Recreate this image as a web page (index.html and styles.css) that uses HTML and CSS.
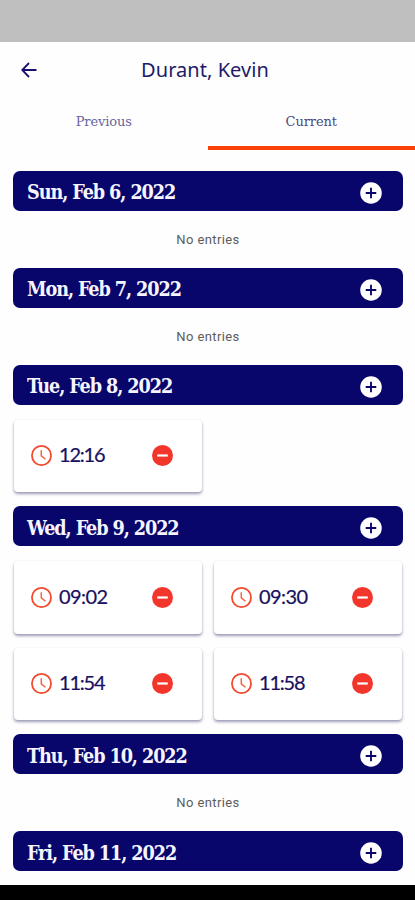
FILE: index.html
```
<!DOCTYPE html>
<html lang="en">
<head>
<meta charset="utf-8">
<title>Durant, Kevin</title>
<link rel="stylesheet" href="styles.css">
</head>
<body>
<svg class="defs" width="0" height="0">
  <symbol id="add" viewBox="2 2 20 20"><circle cx="12" cy="12" r="9.8" fill="#fff"/><path d="M12 7.2v9.6M7.2 12h9.6" stroke="#08056b" stroke-width="1.7"/></symbol>
  <symbol id="remove" viewBox="2 2 20 20"><circle cx="12" cy="12" r="10" fill="#f3362b"/><path d="M7 12h10" stroke="#fff" stroke-width="2.1"/></symbol>
  <symbol id="clock" viewBox="2 2 20 20"><circle cx="12" cy="12" r="9.1" fill="none" stroke="#f4492c" stroke-width="1.7"/><path d="M11.8 7v5.4l4 3.2" fill="none" stroke="#f4643c" stroke-width="1.4"/></symbol>
</svg>
<div class="status"></div>
<header class="top">
  <svg class="back" viewBox="0 0 16 16"><path d="M15.5 8H1.2M8 1L1.2 8L8 15" fill="none" stroke="#17106f" stroke-width="1.8"/></svg>
  <h1><span>Durant, Kevin</span></h1>
</header>
<nav class="tabs"><div class="tab">Previous</div><div class="tab active">Current</div></nav>
<main>
  <section><h2><span class="date">Sun, Feb 6, 2022</span><svg><use href="#add"/></svg></h2><p>No entries</p></section>
  <section><h2><span class="date">Mon, Feb 7, 2022</span><svg><use href="#add"/></svg></h2><p>No entries</p></section>
  <section><h2><span class="date">Tue, Feb 8, 2022</span><svg><use href="#add"/></svg></h2>
    <div class="cards">
      <div class="card"><svg><use href="#clock"/></svg><time class="tight">12:16</time><svg><use href="#remove"/></svg></div>
    </div>
  </section>
  <section><h2><span class="date">Wed, Feb 9, 2022</span><svg><use href="#add"/></svg></h2>
    <div class="cards">
      <div class="card"><svg><use href="#clock"/></svg><time>09:02</time><svg><use href="#remove"/></svg></div>
      <div class="card"><svg><use href="#clock"/></svg><time>09:30</time><svg><use href="#remove"/></svg></div>
      <div class="card"><svg><use href="#clock"/></svg><time class="tight">11:54</time><svg><use href="#remove"/></svg></div>
      <div class="card"><svg><use href="#clock"/></svg><time class="tight">11:58</time><svg><use href="#remove"/></svg></div>
    </div>
  </section>
  <section><h2><span class="date">Thu, Feb 10, 2022</span><svg><use href="#add"/></svg></h2><p>No entries</p></section>
  <section><h2><span class="date">Fri, Feb 11, 2022</span><svg><use href="#add"/></svg></h2></section>
</main>
<footer></footer>
</body>
</html>
```
FILE: styles.css
```
* { box-sizing: border-box; margin: 0; padding: 0; }
body { width: 415px; height: 900px; overflow: hidden; background: #fefefe; display: flex; flex-direction: column; }
.defs { position: absolute; }
.status { height: 42px; background: #bfbfbf; flex: none; }
.top { height: 56px; flex: none; display: grid; grid-template-columns: 57px 1fr 57px; align-items: center; }
.back { width: 16px; height: 16px; margin-left: 21px; }
h1 { font: 400 20px/28px "Noto Sans", sans-serif; letter-spacing: .05px; color: #211a68; text-align: center; white-space: nowrap; padding-right: 5px; }
.tabs { height: 52px; flex: none; display: grid; grid-template-columns: 1fr 1fr; }
.tab { font: 400 13px/48px "DejaVu Serif", serif; letter-spacing: -.1px; color: #68649a; text-align: center; border-bottom: 4px solid transparent; }
.tab.active { color: #4c4880; border-bottom-color: #fa4108; }
main { height: 734.5px; flex: none; padding: 20.7px 12px 0 13px; }
h2 { height: 40px; border-radius: 7px; background: #08056b; display: flex; align-items: center; justify-content: space-between; padding: 0 21px 0 14px; }
h2 svg { width: 22px; height: 22px; margin-top: 4px; }
.date { font: 700 20px/40px "DejaVu Serif Condensed", "DejaVu Serif", serif; letter-spacing: -1.1px; color: #f6f5ff; white-space: nowrap; transform: scaleX(.98); transform-origin: left; padding-top: 3px; }
p { height: 57px; font: 400 13px/57px Roboto, sans-serif; letter-spacing: .4px; color: #5c5c5c; text-align: center; }
.cards { display: grid; grid-template-columns: 188px 188px; gap: 14px 12px; padding: 15px 1px 14px; }
.card { height: 72.5px; background: #fff; border-radius: 4px; box-shadow: 0 2px 3px #9c9bb8, 0 0 1px #dddde8; display: flex; align-items: center; padding: 0 29px 0 17px; }
.card svg { width: 21px; height: 21px; }
.card svg:last-child { margin-left: auto; }
time { font: 400 20px/28px Lato, sans-serif; -webkit-text-stroke: .2px #17105f; letter-spacing: -.6px; color: #17105f; margin: 0 0 3px 7px; }
time.tight { letter-spacing: -1.2px; }
footer { flex: 1; background: #000; }
```
